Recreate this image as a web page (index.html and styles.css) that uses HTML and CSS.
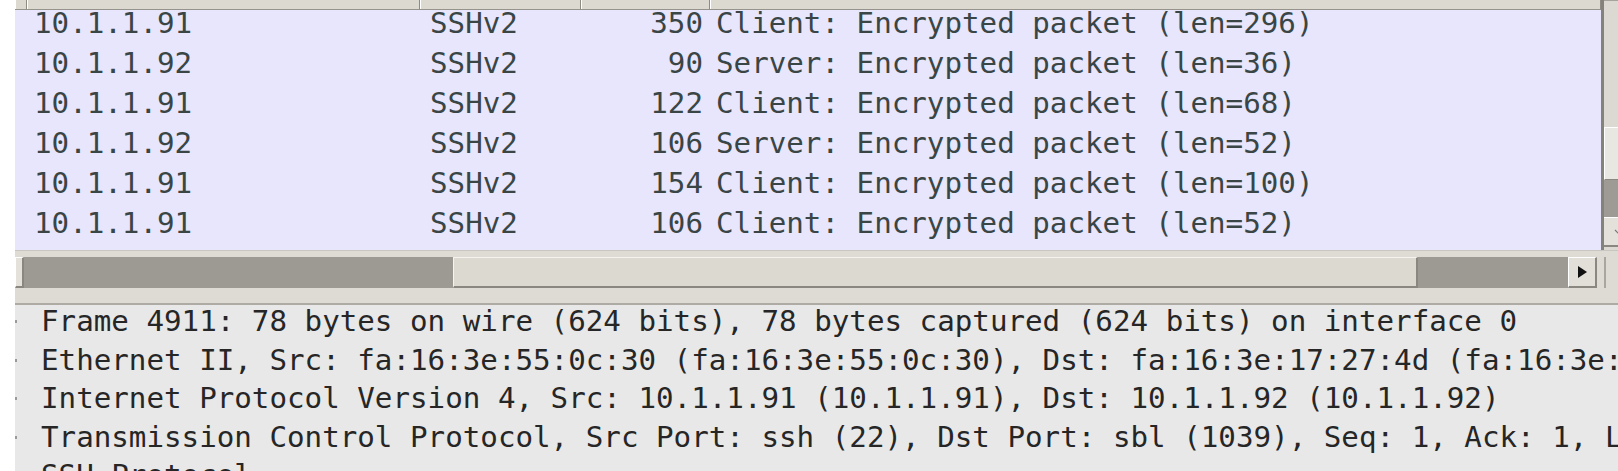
FILE: index.html
```html
<!DOCTYPE html>
<html>
<head>
<meta charset="utf-8">
<title>Packet list</title>
<link rel="stylesheet" href="styles.css">
</head>
<body>
<div class="app">
  <div class="top">
    <div class="list">
      <div class="hdr">
        <div class="hc c1"></div><div class="hc c2"></div><div class="hc c3"></div><div class="hc c4"></div><div class="hc c5"></div>
      </div>
      <div class="rows">
        <div class="row"><span class="c1"></span><span class="c2">10.1.1.91</span><span class="c3">SSHv2</span><span class="c4">350</span><span class="c5">Client: Encrypted packet (len=296)</span></div>
        <div class="row"><span class="c1"></span><span class="c2">10.1.1.92</span><span class="c3">SSHv2</span><span class="c4">90</span><span class="c5">Server: Encrypted packet (len=36)</span></div>
        <div class="row"><span class="c1"></span><span class="c2">10.1.1.91</span><span class="c3">SSHv2</span><span class="c4">122</span><span class="c5">Client: Encrypted packet (len=68)</span></div>
        <div class="row"><span class="c1"></span><span class="c2">10.1.1.92</span><span class="c3">SSHv2</span><span class="c4">106</span><span class="c5">Server: Encrypted packet (len=52)</span></div>
        <div class="row"><span class="c1"></span><span class="c2">10.1.1.91</span><span class="c3">SSHv2</span><span class="c4">154</span><span class="c5">Client: Encrypted packet (len=100)</span></div>
        <div class="row"><span class="c1"></span><span class="c2">10.1.1.91</span><span class="c3">SSHv2</span><span class="c4">106</span><span class="c5">Client: Encrypted packet (len=52)</span></div>
      </div>
    </div>
    <div class="vscroll">
      <div class="vtop"></div>
      <div class="vthumb"></div>
      <div class="vtrack"></div>
      <div class="vbtn"><svg width="8" height="6" viewBox="0 0 8 6"><polyline points="1,1 4,4 7,1" fill="none" stroke="#777" stroke-width="1.2"/></svg></div>
      <div class="vrest"></div>
    </div>
  </div>
  <div class="hbar">
    <div class="hgap"></div>
    <div class="hrow">
      <div class="hstub"></div>
      <div class="htrack t1"></div>
      <div class="hthumb"></div>
      <div class="htrack t2"></div>
      <div class="hbtn"><svg width="9" height="12" viewBox="0 0 9 12"><polygon points="0,0 9,6 0,12" fill="#111"/></svg></div>
      <div class="hfill"><div class="vline"></div></div>
    </div>
    <div class="hgap2"></div>
  </div>
  <div class="detail">
    <div class="dl"><i class="mk"></i><span class="dt">Frame 4911: 78 bytes on wire (624 bits), 78 bytes captured (624 bits) on interface 0</span></div>
    <div class="dl"><i class="mk"></i><span class="dt">Ethernet II, Src: fa:16:3e:55:0c:30 (fa:16:3e:55:0c:30), Dst: fa:16:3e:17:27:4d (fa:16:3e:17:27:4d)</span></div>
    <div class="dl"><i class="mk"></i><span class="dt">Internet Protocol Version 4, Src: 10.1.1.91 (10.1.1.91), Dst: 10.1.1.92 (10.1.1.92)</span></div>
    <div class="dl"><i class="mk"></i><span class="dt">Transmission Control Protocol, Src Port: ssh (22), Dst Port: sbl (1039), Seq: 1, Ack: 1, Len: 24</span></div>
    <div class="dl"><i class="mk"></i><span class="dt">SSH Protocol</span></div>
  </div>
</div>
</body>
</html>
```
FILE: styles.css
```css
html, body {
  margin: 0;
  padding: 0;
  background: #ffffff;
  width: 1618px;
  height: 471px;
  overflow: hidden;
}
.app {
  padding-left: 15px;
  display: flex;
  flex-direction: column;
  font-family: "DejaVu Sans Mono", monospace;
  font-size: 29.2px;
  width: 1603px;
}
.top {
  display: flex;
  height: 250px;
}
.list {
  width: 1586px;
  background: #e7e6fc;
  overflow: hidden;
}
.hdr {
  display: grid;
  grid-template-columns: 12px 393px 161px 129px 1fr;
  height: 10px;
}
.hc {
  background: #dcd9d1;
  border-bottom: 1px solid #96938c;
  border-right: 1px solid #8e8b84;
  box-shadow: inset 1px 0 0 #ffffff;
  box-sizing: border-box;
}
.rows {
  display: flex;
  flex-direction: column;
}
.row {
  display: grid;
  grid-template-columns: 12px 393px 161px 129px 1fr;
  height: 40px;
  line-height: 26px;
  white-space: nowrap;
  color: #3a4545;
}
.row .c2 { padding-left: 7px; }
.row .c3 { padding-left: 10px; }
.row .c4 { text-align: right; padding-right: 7px; }
.row .c5 { padding-left: 6px; }

.vscroll {
  width: 17px;
  border-left: 3px solid #85827b;
  box-sizing: border-box;
  display: flex;
  flex-direction: column;
  background: #dcd9d2;
}
.vtop {
  height: 127px;
  border-top: 1px solid #a6a39c;
  box-sizing: border-box;
}
.vthumb {
  height: 53px;
  background: #e9e7e2;
  border-left: 1px solid #ffffff;
  border-top: 1px solid #ffffff;
  border-bottom: 1px solid #8a8780;
  box-sizing: border-box;
}
.vtrack {
  height: 37px;
  background: #9e9b94;
}
.vbtn {
  height: 30px;
  background: #e4e1db;
  border-top: 1px solid #ffffff;
  border-bottom: 2px solid #8a8780;
  box-sizing: border-box;
  display: flex;
  align-items: center;
  justify-content: flex-end;
}
.vbtn svg { display: block; margin-right: -4px; }
.vrest { flex: 1; }

.hbar {
  display: flex;
  flex-direction: column;
  height: 55px;
  background: #dedbd4;
}
.hgap {
  height: 7px;
  border-top: 1px solid #c9c6bf;
  box-sizing: border-box;
}
.hrow {
  display: flex;
  height: 31px;
}
.hstub {
  width: 9px;
  background: #e4e1db;
  border-top: 1px solid #ffffff;
  border-left: 1px solid #ffffff;
  border-right: 2px solid #8a8780;
  border-bottom: 2px solid #8a8780;
  box-sizing: border-box;
}
.htrack {
  background: #9d9a93;
}
.t1 { width: 429px; }
.t2 { width: 150px; }
.hthumb {
  width: 965px;
  background: #dcd9d1;
  border-top: 1px solid #f4f3f0;
  border-left: 1px solid #f4f3f0;
  border-right: 2px solid #8a8780;
  border-bottom: 2px solid #8a8780;
  box-sizing: border-box;
}
.hbtn {
  width: 29px;
  background: #e2dfd9;
  border-top: 1px solid #ffffff;
  border-left: 1px solid #ffffff;
  border-right: 2px solid #8a8780;
  border-bottom: 2px solid #8a8780;
  box-sizing: border-box;
  display: flex;
  align-items: center;
  justify-content: center;
}
.hbtn svg { display: block; }
.hfill {
  flex: 1;
  display: flex;
}
.vline {
  margin-left: 7px;
  width: 2px;
  background: #a9a6a0;
}
.hgap2 {
  flex: 1;
  border-bottom: 2px solid #aeaba5;
}

.detail {
  background: #e8e8e8;
  height: 166px;
  overflow: hidden;
  color: #262626;
}
.dl {
  display: flex;
  align-items: flex-start;
  height: 38.5px;
  white-space: nowrap;
}
.mk {
  display: block;
  width: 2px;
  height: 3px;
  margin-top: 15px;
  background: #9a9a9a;
  flex: none;
}
.dt {
  margin-left: 24px;
  line-height: 33px;
}
```
